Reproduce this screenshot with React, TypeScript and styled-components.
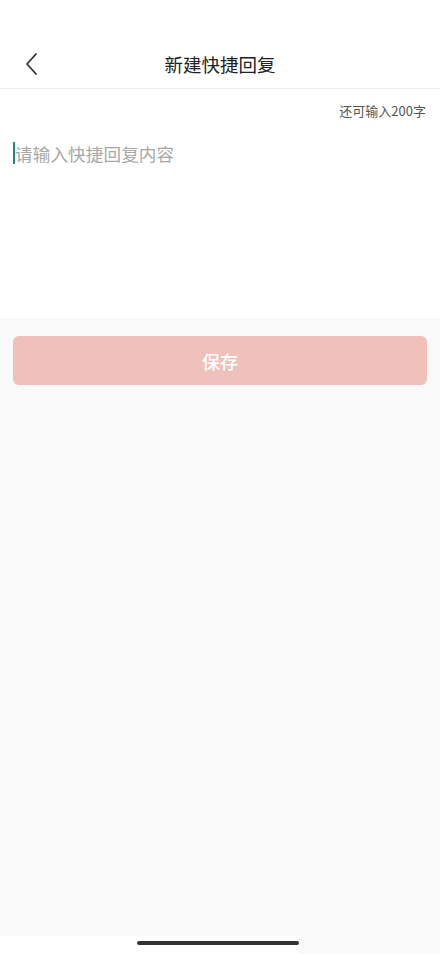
import React from "react";
import styled, { createGlobalStyle } from "styled-components";

const GlobalStyle = createGlobalStyle`
  html, body {
    margin: 0;
    padding: 0;
    background: #f9f9f9;
    font-family: "Noto Sans CJK SC", "Noto Sans", sans-serif;
  }
  #root {
    min-height: 954px;
  }
`;

const Page = styled.div`
  width: 440px;
  height: 954px;
  display: flex;
  flex-direction: column;
  background: #f9f9f9;
`;

const StatusBar = styled.div`
  height: 40px;
  background: #fff;
`;

const Header = styled.div`
  height: 48px;
  background: #fff;
  border-bottom: 1px solid #eeeeee;
  display: grid;
  grid-template-columns: 60px 1fr 60px;
  align-items: center;
`;

const BackButton = styled.button`
  border: none;
  background: none;
  padding: 0 0 0 24px;
  height: 100%;
  display: flex;
  align-items: center;
  cursor: pointer;
`;

const Title = styled.h1`
  margin: 0;
  font-size: 18.5px;
  font-weight: 400;
  color: #222;
  text-align: center;
`;

const Editor = styled.div`
  background: #fff;
  height: 229px;
  padding: 0 14px 0 13px;
  display: flex;
  flex-direction: column;
`;

const Counter = styled.div`
  align-self: flex-end;
  margin-top: 12px;
  font-size: 13px;
  color: #555;
  line-height: 20px;
`;

const InputLine = styled.div`
  margin-top: 20px;
  display: flex;
  align-items: center;
  height: 24px;
`;

const Caret = styled.span`
  width: 2px;
  height: 22px;
  background: #1a8c7c;
`;

const Placeholder = styled.span`
  font-size: 17.6px;
  color: #a8a8a8;
  letter-spacing: 0.1px;
`;

const Actions = styled.div`
  padding: 18px 13px 0 13px;
`;

const SaveButton = styled.button`
  width: 100%;
  height: 49px;
  border: none;
  border-radius: 6px;
  background: #f0c0bb;
  color: #fff;
  font-family: inherit;
  font-size: 18px;
  font-weight: 500;
`;

const Spacer = styled.div`
  flex: 1;
`;

const HomeArea = styled.div`
  width: 299px;
  height: 18px;
  background: #fff;
  display: flex;
  justify-content: flex-end;
  padding-top: 5px;
  box-sizing: border-box;
`;

const HomeIndicator = styled.div`
  width: 162px;
  height: 4px;
  border-radius: 2px;
  background: #333;
`;

export default function App() {
  return (
    <>
      <GlobalStyle />
      <Page>
        <StatusBar />
        <Header>
          <BackButton aria-label="返回">
            <svg width="14" height="24" viewBox="0 0 14 24" fill="none">
              <path d="M12 2 L3 12 L12 22" stroke="#333" strokeWidth="1.8" strokeLinecap="round" strokeLinejoin="round" />
            </svg>
          </BackButton>
          <Title>新建快捷回复</Title>
          <div />
        </Header>
        <Editor>
          <Counter>还可输入200字</Counter>
          <InputLine>
            <Caret />
            <Placeholder>请输入快捷回复内容</Placeholder>
          </InputLine>
        </Editor>
        <Actions>
          <SaveButton>保存</SaveButton>
        </Actions>
        <Spacer />
        <HomeArea>
          <HomeIndicator />
        </HomeArea>
      </Page>
    </>
  );
}
